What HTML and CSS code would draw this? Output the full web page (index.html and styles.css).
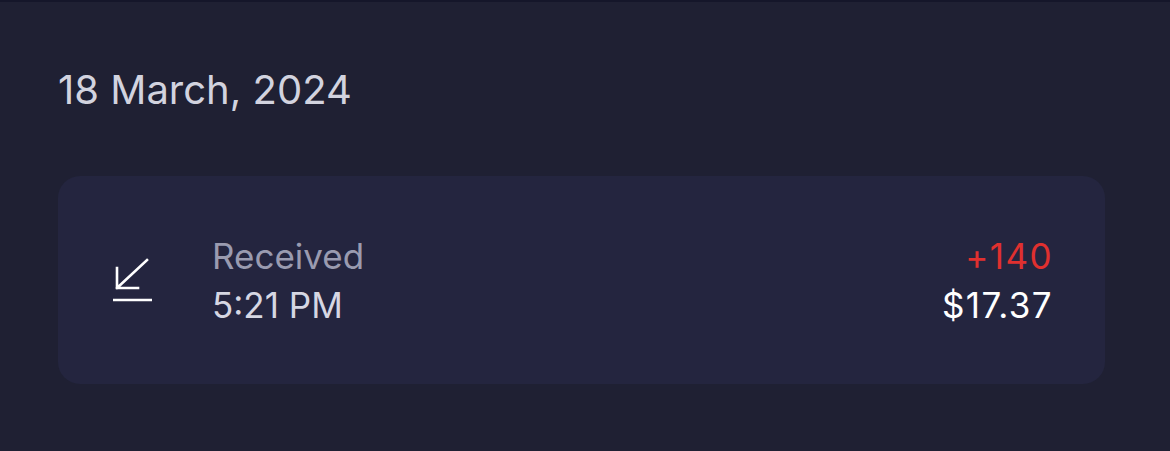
FILE: index.html
```html
<!DOCTYPE html>
<html lang="en">
<head>
    <meta charset="UTF-8">
    <meta name="viewport" content="width=device-width, initial-scale=1.0">
    <title>Transactions</title>
    <link rel="stylesheet" href="styles.css">
</head>
<body>
    <section class="day">
        <h2 class="day-title">18 March, 2024</h2>
        <div class="tx">
            <div class="tx-icon">
                <svg width="44" height="48" viewBox="0 0 44 48">
                    <path d="M35 3 L5 31 M5 11 V31 H26" fill="none" stroke="#fff" stroke-width="2.6" stroke-linecap="square"/>
                    <path d="M1 43 H40" stroke="#fff" stroke-width="2.6"/>
                </svg>
            </div>
            <div class="tx-info">
                <span class="tx-type">Received</span>
                <span class="tx-time">5:21 PM</span>
            </div>
            <div class="tx-amount">
                <span class="tx-points">+140</span>
                <span class="tx-value">$17.37</span>
            </div>
        </div>
    </section>
</body>
</html>
```

FILE: styles.css
```css
body{
    margin: 0;
    background-color: #1f2033;
    border-top: 2px solid #15162a;
    font-family: Inter, "Noto Sans", sans-serif;
    height: 449px;
}
.day{
    padding: 0 65px 0 58px;
}
.day-title{
    margin: 0;
    padding-top: 64px;
    height: 108px;
    box-sizing: border-box;
    font-size: 40px;
    font-weight: 400;
    color: #d2d3df;
    line-height: 48px;
}
.tx{
    margin-top: 66px;
    height: 208px;
    display: flex;
    align-items: center;
    padding: 0 53px 0 54px;
    background-color: #24253f;
    border-radius: 22px;
}
.tx-icon{
    width: 100px;
    display: flex;
    margin-top: 2px;
}
.tx-info{
    display: flex;
    flex-flow: column;
    flex: 1;
    gap: 5px;
}
.tx-info span,
.tx-amount span{
    font-size: 35px;
    line-height: 44px;
}
.tx-type{
    color: #9a9bb0;
}
.tx-time{
    color: #d6d7e3;
}
.tx-amount{
    display: flex;
    flex-flow: column;
    align-items: flex-end;
    gap: 5px;
    letter-spacing: 1.4px;
    margin-right: -1px;
}
.tx-points{
    color: #e0302f;
}
.tx-value{
    color: #ffffff;
}
```
